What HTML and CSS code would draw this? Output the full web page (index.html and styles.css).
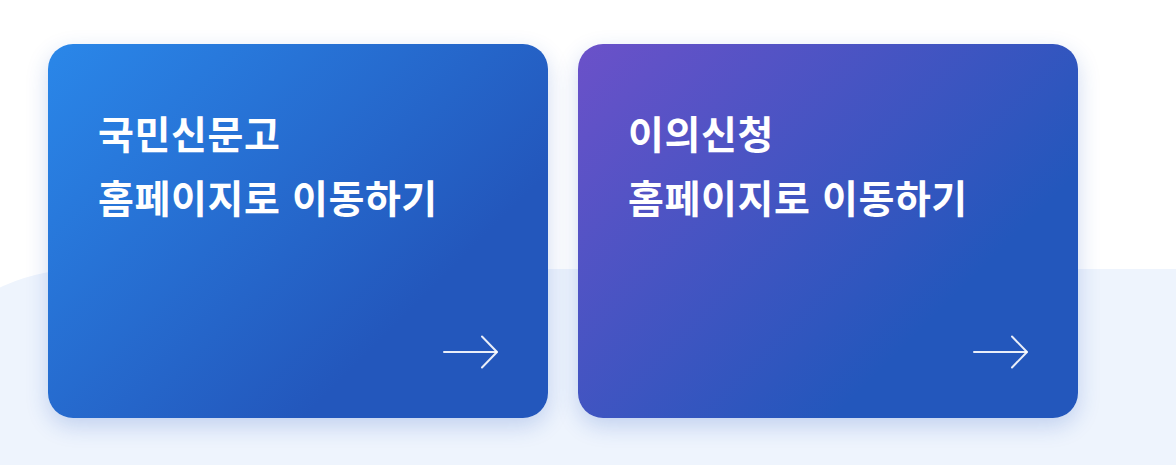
FILE: index.html
```html
<!DOCTYPE html>
<html lang="ko">
<head>
    <meta charset="UTF-8">
    <meta name="viewport" content="width=device-width, initial-scale=1.0">
    <title>바로가기</title>
    <link rel="stylesheet" href="styles.css">
</head>
<body>
    <div class="visual">
        <div class="card-list">
            <a class="card card-blue" href="#">
                <p class="card-title">국민신문고<br>홈페이지로 이동하기</p>
                <svg class="card-arrow" width="56" height="34" viewBox="0 0 56 34" fill="none">
                    <line x1="2" y1="17" x2="54.5" y2="17"/>
                    <polyline points="40,1.5 55,17 40,32.5"/>
                </svg>
            </a>
            <a class="card card-purple" href="#">
                <p class="card-title">이의신청<br>홈페이지로 이동하기</p>
                <svg class="card-arrow" width="56" height="34" viewBox="0 0 56 34" fill="none">
                    <line x1="2" y1="17" x2="54.5" y2="17"/>
                    <polyline points="40,1.5 55,17 40,32.5"/>
                </svg>
            </a>
        </div>
    </div>
</body>
</html>
```

FILE: styles.css
```css
body {
    margin: 0;
    background-color: #fff;
    font-family: "Noto Sans CJK KR", "Noto Sans", sans-serif;
}
.visual {
    position: relative;
    height: 465px;
    padding: 44px 48px 0;
    box-sizing: border-box;
    overflow: hidden;
}
/* light band behind the lower half of the cards */
.visual::before {
    content: '';
    position: absolute;
    top: 269px;
    left: -116px;
    right: 0;
    height: 400px;
    background-color: #eef4fd;
    border-top-left-radius: 200px;
}
.card-list {
    position: relative;
    display: flex;
    gap: 30px;
}
.card {
    width: 500px;
    height: 374px;
    box-sizing: border-box;
    padding: 56px 50px 49px;
    border-radius: 25px;
    display: flex;
    flex-direction: column;
    justify-content: space-between;
    color: #fff;
    text-decoration: none;
    box-shadow: 0 8px 22px rgba(35, 88, 189, 0.22);
}
.card-blue {
    background: linear-gradient(135deg, #2a87e9 0%, #2357bc 72%);
}
.card-purple {
    background: linear-gradient(135deg, #6b51c9 0%, #2357bc 72%);
}
.card-title {
    margin: 0;
    font-size: 39px;
    font-weight: 700;
    line-height: 64px;
    letter-spacing: 0.6px;
}
.card-arrow {
    align-self: flex-end;
    stroke: rgba(255, 255, 255, 0.9);
    stroke-width: 2;
    stroke-linecap: round;
    stroke-linejoin: round;
}
```
